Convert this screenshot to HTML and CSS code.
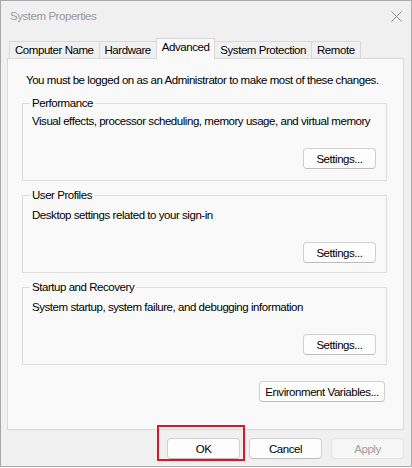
FILE: index.html
```html
<!DOCTYPE html>
<html lang="en">
<head>
<meta charset="utf-8">
<title>System Properties</title>
<link rel="stylesheet" href="styles.css">
</head>
<body>
<div class="window">
  <div class="titlebar">
    <span class="title">System Properties</span>
    <svg class="close" width="11" height="11" viewBox="0 0 11 11"><path d="M0.5 0.5 L10.5 10.5 M10.5 0.5 L0.5 10.5" stroke="#8a8a8a" stroke-width="1" fill="none"/></svg>
  </div>
  <div class="body">
    <div class="tabs">
      <div class="tab">Computer Name</div>
      <div class="tab">Hardware</div>
      <div class="tab active">Advanced</div>
      <div class="tab">System Protection</div>
      <div class="tab">Remote</div>
    </div>
    <div class="panel">
      <p class="note">You must be logged on as an Administrator to make most of these changes.</p>
      <fieldset class="group group-compact">
        <legend>Performance</legend>
        <p class="desc">Visual effects, processor scheduling, memory usage, and virtual memory</p>
        <div class="actions"><button class="btn">Settings...</button></div>
      </fieldset>
      <fieldset class="group">
        <legend>User Profiles</legend>
        <p class="desc">Desktop settings related to your sign-in</p>
        <div class="actions"><button class="btn">Settings...</button></div>
      </fieldset>
      <fieldset class="group">
        <legend>Startup and Recovery</legend>
        <p class="desc">System startup, system failure, and debugging information</p>
        <div class="actions"><button class="btn">Settings...</button></div>
      </fieldset>
      <div class="env"><button class="btn btn-wide">Environment Variables...</button></div>
    </div>
    <div class="footer">
      <span class="highlight"><button class="btn">OK</button></span>
      <button class="btn">Cancel</button>
      <button class="btn" disabled>Apply</button>
    </div>
  </div>
</div>
</body>
</html>
```
FILE: styles.css
```css
* { box-sizing: border-box; }
body {
  margin: 0;
  background: #ffffff;
  font-family: "Liberation Sans", Arial, sans-serif;
  font-size: 11.5px;
  letter-spacing: -0.45px;
  color: #000;
}
.window {
  width: 412px;
  height: 467px;
  border: 1px solid #a9a9a9;
  background: #f0f0f0;
  display: flex;
  flex-direction: column;
}
.titlebar {
  height: 30px;
  display: flex;
  align-items: center;
  justify-content: space-between;
  padding: 0 9px 0 9px;
  color: #9a9a9a;
}
.close { display: block; margin-top: 1px; }
.body {
  flex: 1;
  display: flex;
  flex-direction: column;
  padding: 0 7px 0 6px;
}
.tabs {
  height: 27px;
  display: flex;
  align-items: flex-end;
  padding-left: 2px;
}
.tab {
  height: 17px;
  line-height: 16px;
  padding: 0 5px;
  border: 1px solid #d9d9d9;
  border-bottom: none;
  margin-right: -1px;
  background: #f0f0f0;
  white-space: nowrap;
}
.tab.active {
  height: 21px;
  line-height: 17px;
  background: #f9f9f9;
  margin-bottom: -1px;
  position: relative;
  z-index: 1;
}
.panel {
  height: 372px;
  border: 1px solid #d9d9d9;
  background: #f9f9f9;
  padding: 13px 16px 0 14px;
  display: flex;
  flex-direction: column;
}
.note {
  margin: 0 0 7px 4px;
  line-height: 16px;
  white-space: nowrap;
}
.group {
  margin: 0 0 6px 0;
  padding: 0 10px 9px 9px;
  border: 1px solid #dcdcdc;
  min-width: 0;
}
.group legend {
  margin-left: -2px;
  padding: 0 2px;
  line-height: 16px;
}
.desc {
  margin: 4px 0 0 0;
  line-height: 16px;
  white-space: nowrap;
}
.group-compact { padding-bottom: 11px; }
.group-compact .desc { margin-top: 2px; }
.actions {
  display: flex;
  justify-content: flex-end;
  margin-top: 19px;
}
.btn {
  font-family: inherit;
  font-size: 11.5px;
  letter-spacing: -0.45px;
  color: #000;
  width: 73px;
  height: 21px;
  padding: 0;
  background: #fdfdfd;
  border: 1px solid #d0d0d0;
  border-bottom-color: #bdbdbd;
  border-radius: 4px;
  white-space: nowrap;
}
.btn:disabled {
  color: #a0a0a0;
  background: #f6f6f6;
  border-color: #e3e3e3;
}
.btn-wide { width: 126px; }
.env {
  display: flex;
  justify-content: flex-end;
  margin-top: 10px;
  padding-right: 2px;
}
.footer {
  display: flex;
  justify-content: flex-end;
  gap: 9px;
  margin-top: 8px;
}
.highlight {
  position: relative;
  display: flex;
}
.highlight::after {
  content: "";
  position: absolute;
  inset: -13px -5px -2px -10px;
  border: 2px solid #e81123;
  pointer-events: none;
}
```
